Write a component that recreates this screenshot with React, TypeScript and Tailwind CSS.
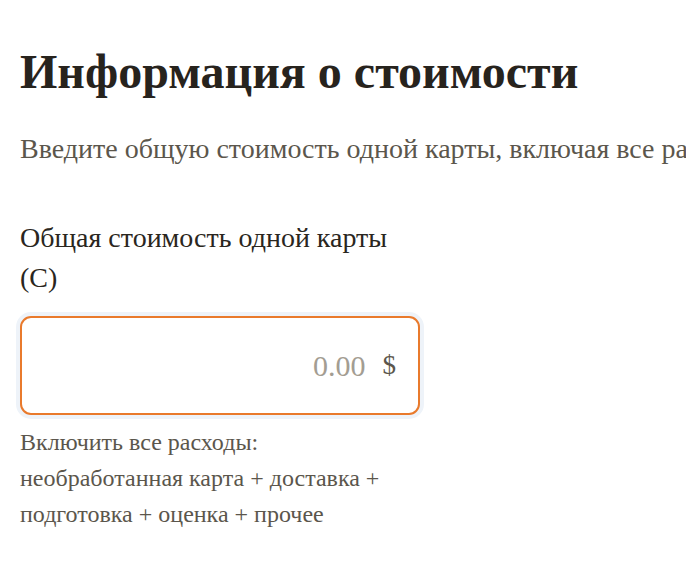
import { useState } from 'react';

export default function App() {
  const [cost, setCost] = useState('');

  return (
    <div
      className="min-h-screen w-full overflow-hidden bg-white px-5 pt-[43px] text-[#2a2620]"
      style={{ fontFamily: '"Liberation Serif", "Times New Roman", serif' }}
    >
      {/* Header */}
      <h1 className="text-[48px] font-bold leading-[1.2] text-[#27231d]">Информация о стоимости</h1>
      <p className="mt-[27px] whitespace-nowrap text-[28px] leading-[1.5] text-[#5b564c]">
        Введите общую стоимость одной карты, включая все расходы.
      </p>

      {/* Cost field */}
      <div className="mt-[48px] w-[400px]">
        <label htmlFor="card-cost" className="block text-[28px] leading-[40px] text-[#2a2620]">
          Общая стоимость одной карты (С)
        </label>
        <div className="mt-[18px] flex h-[99px] items-center rounded-[11px] border-2 border-[#e97a2c] bg-white pr-[22px] shadow-[0_0_0_4px_#eef3f9]">
          <input
            id="card-cost"
            type="text"
            inputMode="decimal"
            value={cost}
            onChange={(e) => setCost(e.target.value)}
            placeholder="0.00"
            className="min-w-0 flex-1 bg-transparent text-right text-[30px] text-[#2a2620] outline-none placeholder:text-[#a39d92]"
            style={{ fontFamily: '"Liberation Serif", "Times New Roman", serif' }}
          />
          <span className="ml-[17px] text-[27px] text-[#5b564c]">$</span>
        </div>
        <p className="mt-[9px] text-[24px] leading-[36px] text-[#5b564c]">
          Включить все расходы: необработанная карта + доставка + подготовка + оценка + прочее
        </p>
      </div>
    </div>
  );
}
